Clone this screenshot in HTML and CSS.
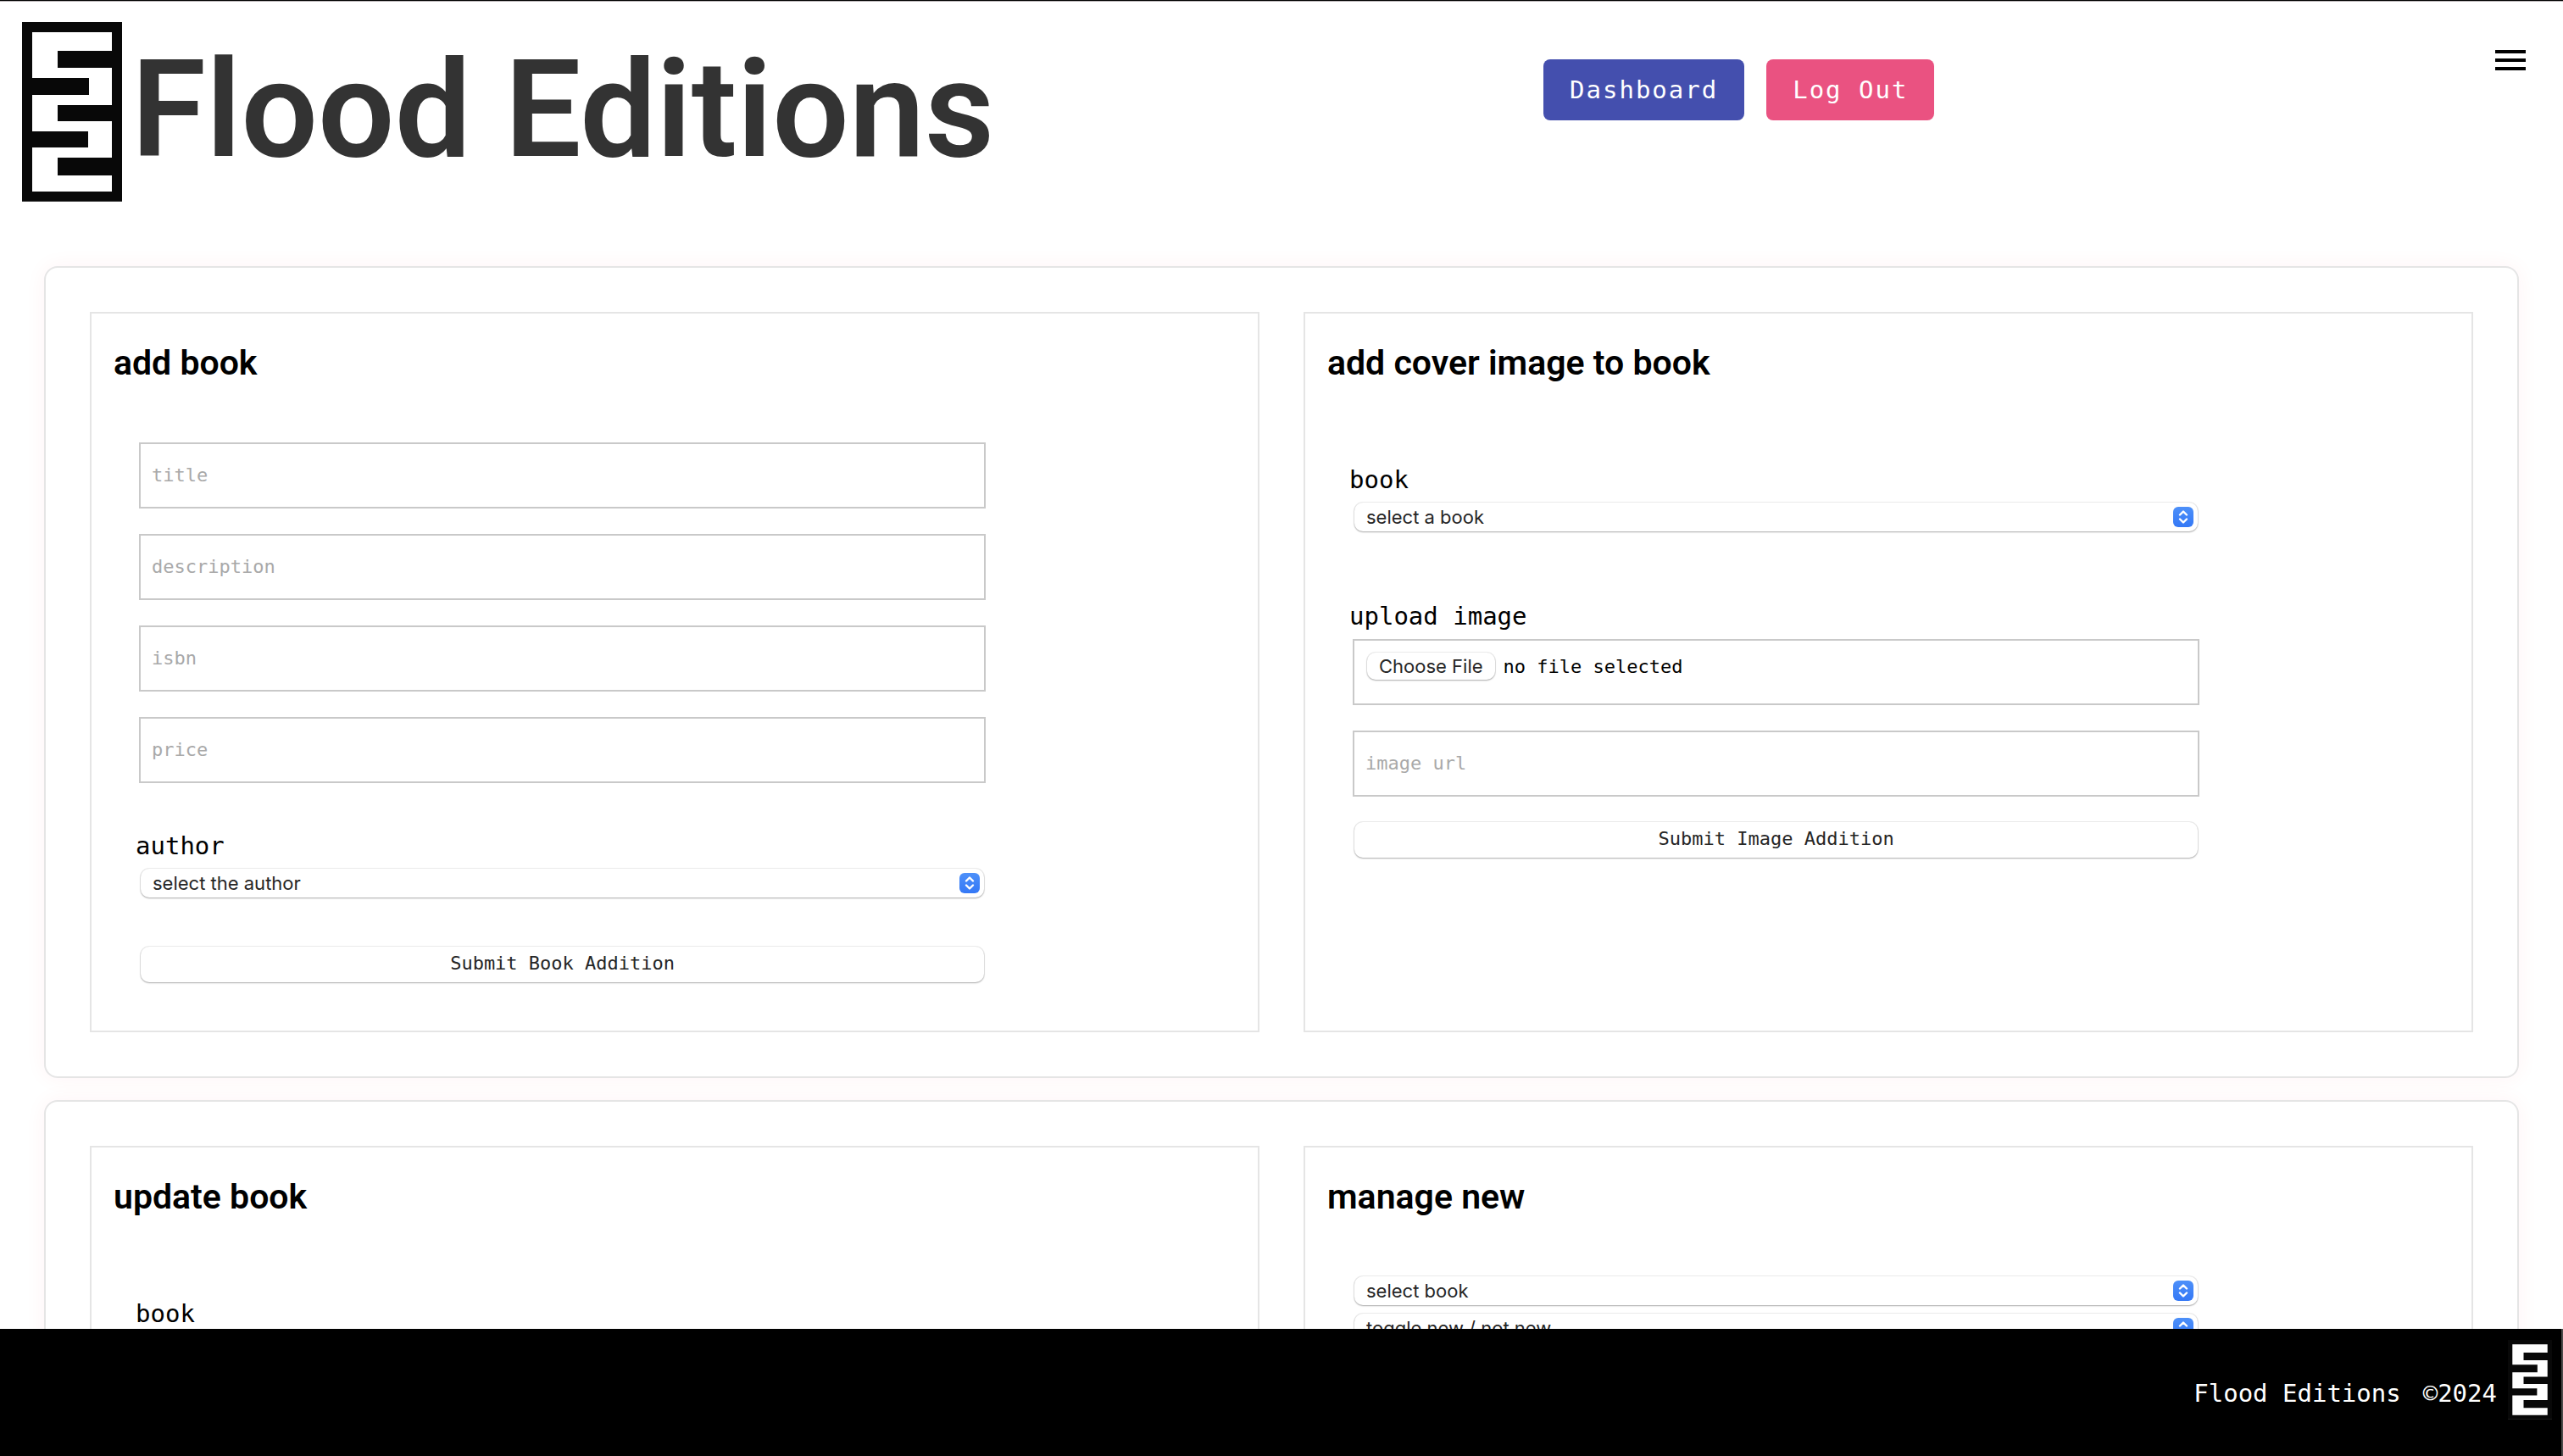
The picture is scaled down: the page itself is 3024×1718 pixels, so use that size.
FILE: index.html
```html
<!DOCTYPE html>
<html lang="en">
<head>
  <meta charset="utf-8">
  <title>Flood Editions</title>
  <meta name="viewport" content="width=device-width, initial-scale=1">
  <link rel="stylesheet" href="styles.css">
</head>
<body>
  <svg class="sprite" aria-hidden="true">
    <symbol id="logo" viewBox="0 0 118 212" preserveAspectRatio="none">
      <rect width="118" height="212" fill="#080808"/>
      <rect y="211" width="118" height="1" fill="#3a3a3a"/>
      <path fill="#fff" d="M12 12H106V34H42V54H106V98H42V117H106V160H42V181H106V200H12V148H78V129H12V86H79V66H12Z"/>
    </symbol>
  </svg>

  <div class="page">
    <header class="header">
      <div class="brand">
        <svg class="brand-logo" role="img" aria-label="Flood Editions logo"><use href="#logo"/></svg>
        <h1 class="brand-name">Flood Editions</h1>
      </div>
      <nav class="nav">
        <a class="nav-link nav-link--primary" href="#dashboard">Dashboard</a>
        <button class="nav-link nav-link--accent" type="button">Log Out</button>
      </nav>
      <button class="menu" type="button" aria-label="Menu">
        <svg class="menu-icon" viewBox="0 0 24 24"><path d="M3 18h18v-2H3v2zm0-5h18v-2H3v2zm0-7v2h18V6H3z"/></svg>
      </button>
    </header>

    <main class="sections">
      <section class="section">
        <article class="panel">
          <h2 class="panel-title">add book</h2>
          <form class="form">
            <input class="text-input" type="text" placeholder="title" aria-label="title">
            <input class="text-input" type="text" placeholder="description" aria-label="description">
            <input class="text-input" type="text" placeholder="isbn" aria-label="isbn">
            <input class="text-input" type="text" placeholder="price" aria-label="price">
            <div class="field">
              <label class="label" for="author">author</label>
              <select class="select" id="author"><option>select the author</option></select>
            </div>
            <button class="submit" type="submit">Submit Book Addition</button>
          </form>
        </article>
        <article class="panel">
          <h2 class="panel-title">add cover image to book</h2>
          <form class="form">
            <div class="field">
              <label class="label" for="cover-book">book</label>
              <select class="select" id="cover-book"><option>select a book</option></select>
            </div>
            <div class="field field--upload">
              <label class="label" for="cover-file">upload image</label>
              <label class="file-box" for="cover-file">
                <input class="file-input" type="file" id="cover-file">
                <span class="file-button">Choose File</span>
                <span>no file selected</span>
              </label>
            </div>
            <input class="text-input" type="text" placeholder="image url" aria-label="image url">
            <button class="submit" type="submit">Submit Image Addition</button>
          </form>
        </article>
      </section>

      <section class="section">
        <article class="panel">
          <h2 class="panel-title">update book</h2>
          <form class="form">
            <div class="field">
              <label class="label" for="update-book">book</label>
              <select class="select" id="update-book"><option>select a book</option></select>
            </div>
          </form>
        </article>
        <article class="panel">
          <h2 class="panel-title">manage new</h2>
          <form class="form form--tight">
            <select class="select" aria-label="select book"><option>select book</option></select>
            <select class="select" aria-label="toggle new / not new"><option>toggle new / not new</option></select>
          </form>
        </article>
      </section>
    </main>
  </div>

  <footer class="footer">
    <span>Flood Editions</span>
    <span>©2024</span>
    <svg class="footer-logo" role="img" aria-label="Flood Editions logo"><use href="#logo"/></svg>
  </footer>
</body>
</html>
```
FILE: styles.css
```css
* {
  box-sizing: border-box;
}

:root {
  --mono: "DejaVu Sans Mono", "Liberation Mono", monospace;
  --sans: Roboto, "Liberation Sans", sans-serif;
  --system: Inter, "Liberation Sans", sans-serif;
  --line: #e5e5e5;
}

body {
  display: flex;
  flex-direction: column;
  height: 100vh;
  margin: 0;
  border-top: 1px solid #000;
  background: #fff;
  color: #000;
  font-family: var(--mono);
  font-size: 29px;
  line-height: 32px;
}

.sprite {
  position: absolute;
  width: 0;
  height: 0;
}

.page {
  flex: 1;
  min-height: 0;
  overflow-y: auto;
  scrollbar-width: none;
  border-top: 1px solid #b5b0b2;
}

/* Header */

.header {
  display: grid;
  grid-template-columns: 45fr 28fr auto;
  align-items: start;
  padding: 24px 38px 24px 26px;
}

.brand {
  display: flex;
  gap: 11px;
}

.brand-logo {
  flex: none;
  width: 118px;
  height: 212px;
}

.brand-name {
  margin: 0;
  color: #333;
  font-family: var(--sans);
  font-size: 160px;
  font-weight: 600;
  line-height: 208px;
  white-space: nowrap;
}

.nav {
  display: flex;
  gap: 26px;
  padding-top: 44px;
}

.nav-link {
  padding: 20px 31px;
  border: 0;
  border-radius: 8px;
  color: #fff;
  font: inherit;
  letter-spacing: 2px;
  text-decoration: none;
}

.nav-link--primary {
  background: #444fae;
}

.nav-link--accent {
  background: #ea5281;
}

.menu {
  margin-top: 21px;
  padding: 0;
  border: 0;
  background: none;
}

.menu-icon {
  display: block;
  width: 48px;
  height: 48px;
}

/* Sections and panels */

.sections {
  display: grid;
  gap: 26px;
  padding: 52px;
}

.section {
  display: grid;
  grid-template-columns: 1fr 1fr;
  gap: 52px;
  padding: 52px;
  border: 2px solid var(--line);
  border-radius: 16px;
  background: #fff;
  box-shadow: 0 0 26px rgba(255, 0, 60, 0.05);
}

.panel {
  padding: 26px;
  border: 2px solid var(--line);
}

.panel-title {
  margin: 0 0 62px;
  font-family: var(--sans);
  font-size: 41px;
  font-weight: 600;
  line-height: 64px;
}

/* Forms */

.form {
  display: flex;
  flex-direction: column;
  gap: 30px;
  width: 80%;
  padding: 0 26px 31px;
}

.form--tight {
  gap: 10px;
}

.field {
  display: flex;
  flex-direction: column;
  gap: 11px;
  padding: 28px 0;
}

.field--upload {
  padding: 26px 0 0;
}

.text-input,
.file-box {
  height: 78px;
  margin: 0 4px;
  border: 2px solid #c9c9c9;
  border-radius: 0;
  background: #fff;
  font-family: var(--mono);
  font-size: 22px;
}

.text-input {
  padding: 0 13px 2px;
}

.text-input::placeholder {
  color: #a9a9a9;
  opacity: 1;
}

.select,
.submit,
.file-button {
  border: 0;
  border-radius: 10px;
  background-color: #fff;
  box-shadow: 0 0 0 1px rgba(0, 0, 0, 0.07), 0 1px 2px rgba(0, 0, 0, 0.28);
  color: #262626;
  font-size: 22px;
}

.select {
  height: 34px;
  margin: 0 6px;
  padding: 0 40px 0 14px;
  appearance: none;
  background-image: url("data:image/svg+xml,%3Csvg xmlns='http://www.w3.org/2000/svg' viewBox='0 0 24 24'%3E%3ClinearGradient id='g' x2='0' y2='1'%3E%3Cstop stop-color='%234d90f9'/%3E%3Cstop offset='1' stop-color='%233478f6'/%3E%3C/linearGradient%3E%3Crect width='24' height='24' rx='6' fill='url(%23g)'/%3E%3Cpath d='M8 9.500l4-4 4 4M8 14.500l4 4 4-4' fill='none' stroke='white' stroke-width='2.400' stroke-linecap='round' stroke-linejoin='round'/%3E%3C/svg%3E");
  background-position: right 5px center;
  background-repeat: no-repeat;
  background-size: 24px 24px;
  font-family: var(--system);
}

.submit {
  height: 42px;
  margin: 0 6px;
  padding: 0 14px 4px;
  font-family: var(--mono);
}

.file-box {
  display: flex;
  align-items: baseline;
  gap: 10px;
  padding: 14px 15px;
  line-height: 32px;
}

.file-input {
  position: absolute;
  width: 1px;
  height: 1px;
  opacity: 0;
}

.file-button {
  padding: 0 14px;
  font-family: var(--system);
}

/* Footer */

.footer {
  display: flex;
  justify-content: flex-end;
  gap: 26px;
  padding: 13px 11px 0 0;
  height: 150px;
  border-right: 2px solid #4a4a4a;
  background: #000;
  color: #fff;
  line-height: 126px;
}

.footer-logo {
  width: 52px;
  height: 94px;
  margin-left: -13px;
}
```
